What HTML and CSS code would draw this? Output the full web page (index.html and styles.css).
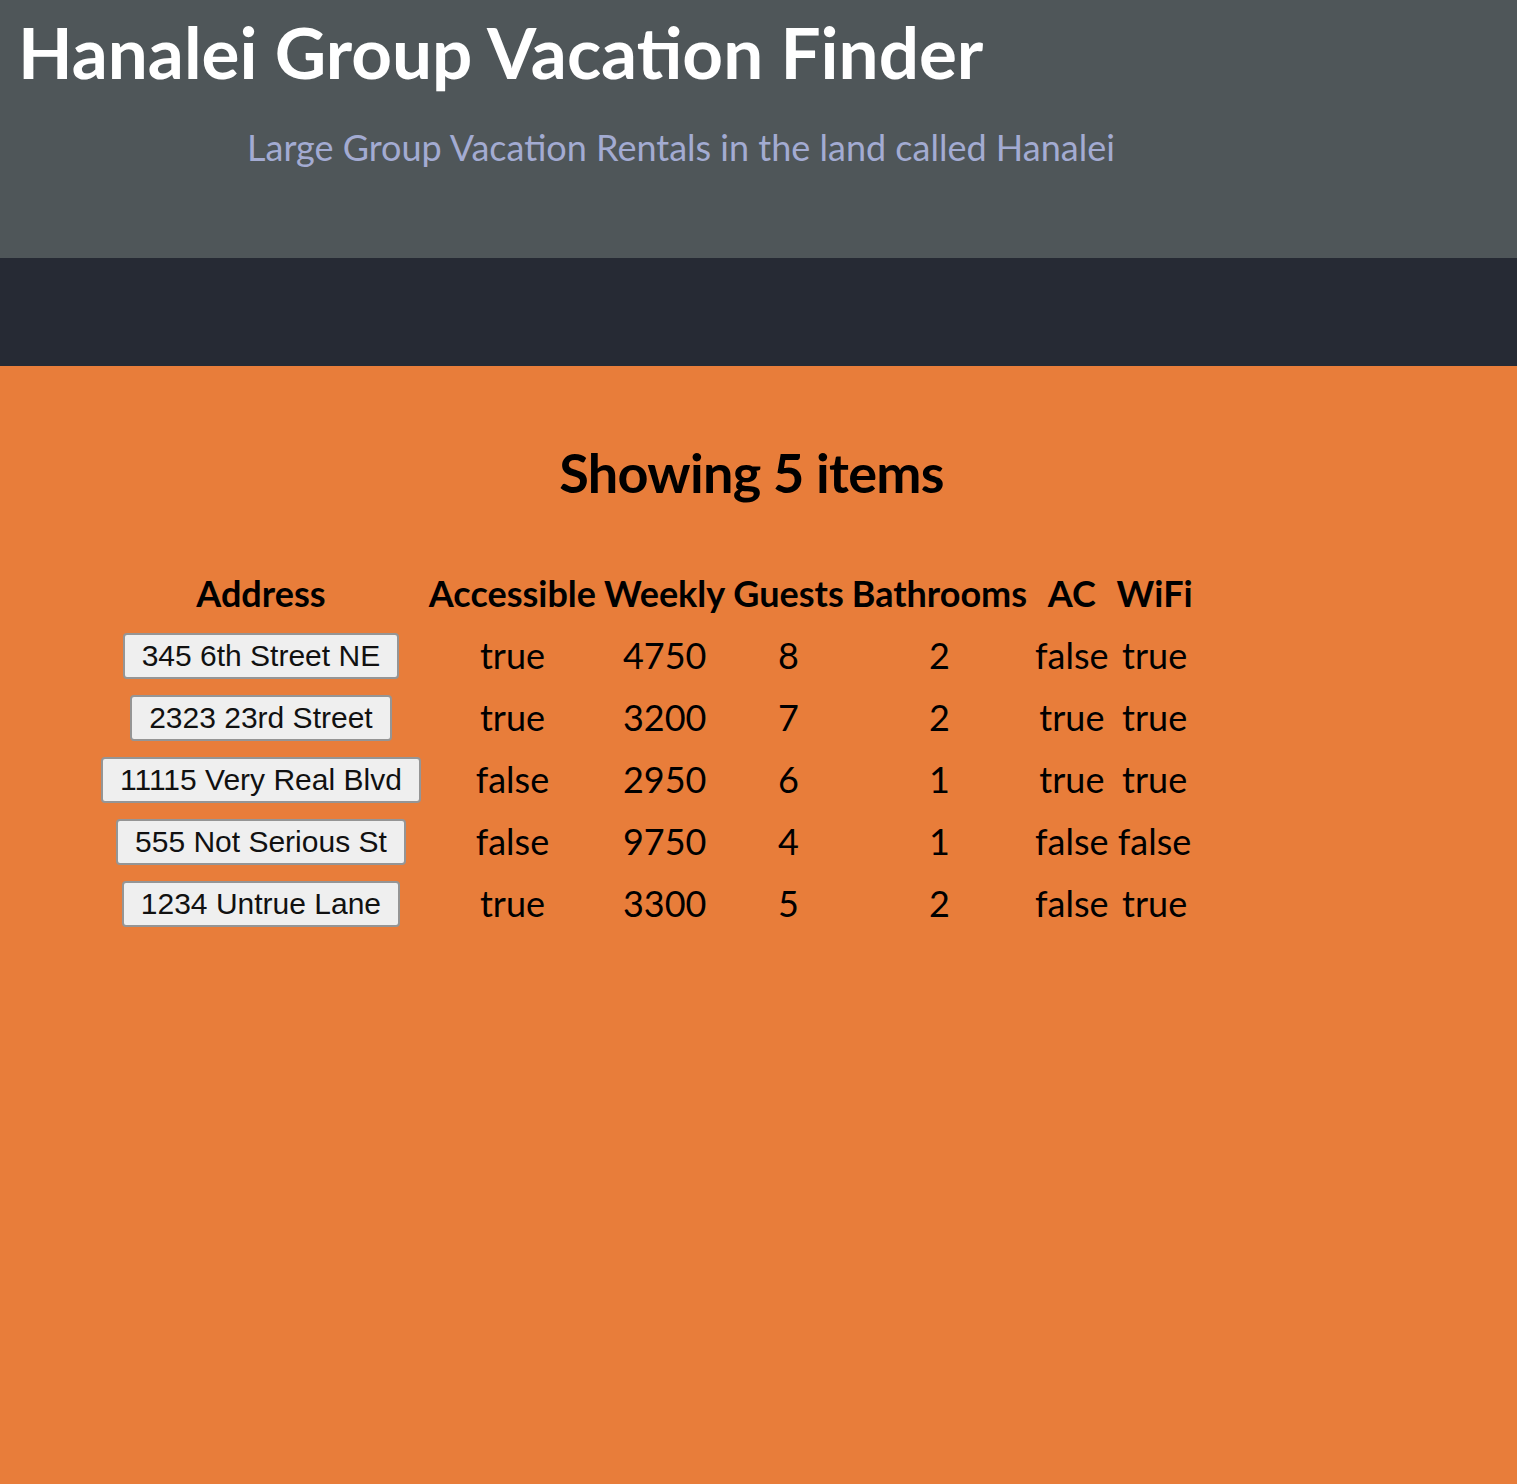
FILE: index.html
```html
<!DOCTYPE html>
<html>
<head>
<meta charset="utf-8">
<title>Hanalei Group Vacation Finder</title>
<link rel="stylesheet" href="styles.css">
</head>
<body>
<header class="site-header">
  <h1 class="title">Hanalei Group Vacation Finder</h1>
  <p class="subtitle">Large Group Vacation Rentals in the land called Hanalei</p>
</header>
<nav class="band"></nav>
<main class="content">
  <h2 class="count">Showing 5 items</h2>
  <table class="listings">
    <thead>
      <tr><th>Address</th><th>Accessible</th><th>Weekly</th><th>Guests</th><th>Bathrooms</th><th>AC</th><th>WiFi</th></tr>
    </thead>
    <tbody>
      <tr><td><button class="addr">345 6th Street NE</button></td><td>true</td><td>4750</td><td>8</td><td>2</td><td>false</td><td>true</td></tr>
      <tr><td><button class="addr">2323 23rd Street</button></td><td>true</td><td>3200</td><td>7</td><td>2</td><td>true</td><td>true</td></tr>
      <tr><td><button class="addr">11115 Very Real Blvd</button></td><td>false</td><td>2950</td><td>6</td><td>1</td><td>true</td><td>true</td></tr>
      <tr><td><button class="addr">555 Not Serious St</button></td><td>false</td><td>9750</td><td>4</td><td>1</td><td>false</td><td>false</td></tr>
      <tr><td><button class="addr">1234 Untrue Lane</button></td><td>true</td><td>3300</td><td>5</td><td>2</td><td>false</td><td>true</td></tr>
    </tbody>
  </table>
</main>
</body>
</html>
```

FILE: styles.css
```css
html, body {
  margin: 0;
  padding: 0;
}
body {
  font-family: Lato, "Open Sans", sans-serif;
  background: #e87d3a;
  min-height: 1484px;
}
.site-header {
  background: #4f5659;
  height: 258px;
  box-sizing: border-box;
  padding-top: 9px;
}
.title {
  margin: 0;
  padding-left: 18px;
  font-size: 71px;
  font-weight: 700;
  color: #ffffff;
  line-height: 86px;
}
.subtitle {
  margin: 30px 0 0 0;
  padding-left: 247px;
  font-size: 36px;
  color: #a3abd2;
  line-height: 44px;
}
.band {
  background: #262a34;
  height: 108px;
}
.content {
  background: #e87d3a;
  padding-top: 71px;
}
.count {
  margin: 0;
  padding-right: 14px;
  text-align: center;
  font-size: 54px;
  letter-spacing: -0.7px;
  font-weight: 700;
  color: #000;
  line-height: 72px;
}
.listings {
  margin: 51px 0 0 95px;
  border-spacing: 4px;
  color: #000;
}
.listings th {
  font-size: 36px;
  font-weight: 700;
  padding: 2px;
  height: 54px;
  line-height: 43px;
}
.listings td {
  font-size: 36px;
  padding: 2px;
  text-align: center;
  height: 54px;
  line-height: 43px;
}
.addr {
  font-family: "Liberation Sans", Arial, sans-serif;
  font-size: 30px;
  color: #111;
  background: #efefef;
  border: 2px solid #959595;
  border-radius: 4px;
  height: 46px;
  padding: 0 17px;
  margin: 0;
  line-height: 40px;
}
```
